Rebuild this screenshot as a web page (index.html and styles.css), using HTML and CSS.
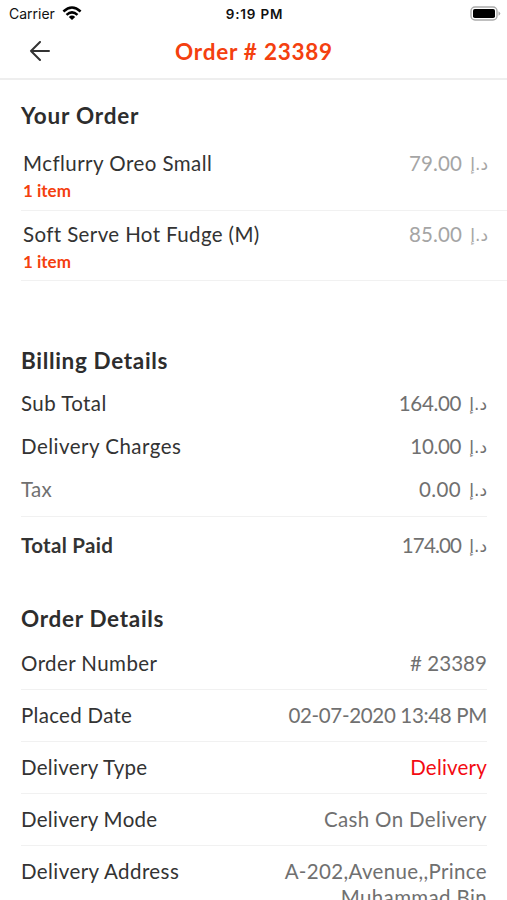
FILE: index.html
```html
<!DOCTYPE html>
<html lang="en">
<head>
<meta charset="utf-8">
<title>Order # 23389</title>
<link rel="stylesheet" href="styles.css">
</head>
<body>
<div class="status">
  <span class="carrier">Carrier</span>
  <svg class="wifi" width="20" height="15" viewBox="0 0 20 15"><g fill="none" stroke="#000" stroke-width="2.5"><path d="M1.4 5.5Q10 -2.4 18.6 5.5"/><path d="M4.5 8.9Q10 3.9 15.5 8.9"/></g><path d="M6.8 10.9Q10 8.1 13.2 10.9L10 14.1Z"/></svg>
  <span class="time">9:19 PM</span>
  <svg class="battery" width="32" height="16" viewBox="0 0 32 16"><rect x="2" y="1" width="26" height="13" rx="4" fill="#fff" stroke="#aaa" stroke-width="1.4"/><rect x="4" y="3" width="22" height="9" rx="1.8"/><path d="M29.5 5.2Q33 7.5 29.5 9.8Z" fill="#aaa"/></svg>
</div>
<header class="nav">
  <svg class="back" width="22" height="22" viewBox="0 0 22 22" fill="none" stroke="#333" stroke-width="2" stroke-linecap="round" stroke-linejoin="round"><path d="M21 10H3M12 1L3 10L12 19"/></svg>
  <h1><span class="s-title">Order # 23389</span></h1>
</header>
<main>
  <section class="order">
    <h2><span class="s-your">Your Order</span></h2>
    <div class="item"><div><p class="name s-mc">Mcflurry Oreo Small</p><p class="qty">1 item</p></div><p class="price light"><span class="s-p">79.00</span><bdi>د.إ</bdi></p></div>
    <div class="item"><div><p class="name s-soft">Soft Serve Hot Fudge (M)</p><p class="qty">1 item</p></div><p class="price light"><span class="s-p">85.00</span><bdi>د.إ</bdi></p></div>
  </section>
  <section class="billing">
    <h2><span class="s-bill">Billing Details</span></h2>
    <div class="row"><span class="s-sub">Sub Total</span><p class="price"><span class="s-p164">164.00</span><bdi>د.إ</bdi></p></div>
    <div class="row"><span class="s-chg">Delivery Charges</span><p class="price"><span class="s-p10">10.00</span><bdi>د.إ</bdi></p></div>
    <div class="row tax"><span class="s-tax">Tax</span><p class="price"><span class="s-p0">0.00</span><bdi>د.إ</bdi></p></div>
    <div class="row total"><span class="s-paid">Total Paid</span><p class="price"><span class="s-p174">174.00</span><bdi>د.إ</bdi></p></div>
  </section>
  <section class="details">
    <h2><span class="s-det">Order Details</span></h2>
    <div class="line"><span class="s-num">Order Number</span><span class="value s-hash"># 23389</span></div>
    <div class="line"><span class="s-placed">Placed Date</span><span class="value s-date">02-07-2020 13:48 PM</span></div>
    <div class="line"><span class="s-type">Delivery Type</span><span class="value red s-del">Delivery</span></div>
    <div class="line"><span class="s-mode">Delivery Mode</span><span class="value s-cash">Cash On Delivery</span></div>
    <div class="line address"><span class="s-addr">Delivery Address</span><span class="value s-ave">A-202,Avenue,,Prince Muhammad Bin</span></div>
  </section>
</main>
</body>
</html>
```
FILE: styles.css
```css
* { box-sizing: border-box; margin: 0; padding: 0; }
body { height: 900px; overflow: hidden; background: #fff; color: #333; font: 20.5px/26px Lato, "DejaVu Sans", sans-serif; }
h1, h2, p { font-weight: inherit; font-size: inherit; }
.status { display: grid; grid-template-columns: 53px 1fr auto 1fr; align-items: center; height: 27px; padding: 0 6px 0 9px; color: #111; font: 14px/20px Inter, sans-serif; }
.status .time { font-weight: 600; font-size: 13.5px; letter-spacing: .8px; margin-left: -54px; }
.status .battery { justify-self: end; }
.nav { display: grid; grid-template-columns: 40px 1fr 40px; align-items: center; height: 53px; padding: 0 27px 2px 28px; border-bottom: 2px solid #eee; }
.nav h1 { text-align: center; color: #f4400f; font-size: 22.5px; font-weight: 700; }
h2 { font-size: 22.5px; font-weight: 700; line-height: 30px; color: #2d2d2d; }
.order { padding: 21px 0 0 21px; height: 265px; }
.item { display: flex; justify-content: space-between; height: 70.5px; padding: 10px 19px 0 2px; border-bottom: 1px solid #f1f1f1; }
.order h2 { margin-bottom: 9px; }
.qty { color: #f4400f; font-size: 17px; font-weight: 700; line-height: 29px; }
.price { display: flex; color: #707070; }
.price.light { color: #a5a5a5; }
.price bdi { width: 26px; text-align: right; font: 17px/28px "DejaVu Sans", sans-serif; letter-spacing: 2px; }
.billing { padding: 1px 20px 0 21px; height: 258px; }
.row { display: flex; justify-content: space-between; height: 43px; padding-top: 9px; }
.billing h2 { margin-bottom: 5px; }
.tax { height: 42px; color: #707070; }
.total { margin-top: 7px; padding-top: 15px; border-top: 1px solid #f1f1f1; font-weight: 700; }
.total .price { font-weight: 400; }
.details { padding: 1px 20px 0 21px; }
.details h2 { margin-bottom: 4px; }
.line { display: flex; justify-content: space-between; height: 52px; padding-top: 12px; border-bottom: 1px solid #f1f1f1; }
.value { color: #707070; text-align: right; }
.red { color: #f30b12; }
.address { height: 80px; border: 0; }
.address .value { width: 215px; }

/* Tracking */
.s-title { letter-spacing: .75px; }
.s-your { letter-spacing: .8px; }
.s-mc { letter-spacing: .45px; }
.s-soft { letter-spacing: .38px; }
.s-bill { letter-spacing: .67px; }
.s-det { letter-spacing: .7px; }
.s-sub, .s-num, .s-addr { letter-spacing: .42px; }
.s-cash, .s-ave { letter-spacing: .35px; }
.s-chg { letter-spacing: .48px; }
.s-tax, .s-paid, .s-placed, .s-type, .s-mode { letter-spacing: .3px; }
.s-del { letter-spacing: .2px; }
.s-hash { letter-spacing: .05px; }
.s-date { letter-spacing: -.33px; }
.s-p { letter-spacing: .1px; }
.s-p164, .s-p10 { letter-spacing: -.35px; }
.s-p0 { letter-spacing: .4px; }
.s-p174 { letter-spacing: -.85px; }
```
